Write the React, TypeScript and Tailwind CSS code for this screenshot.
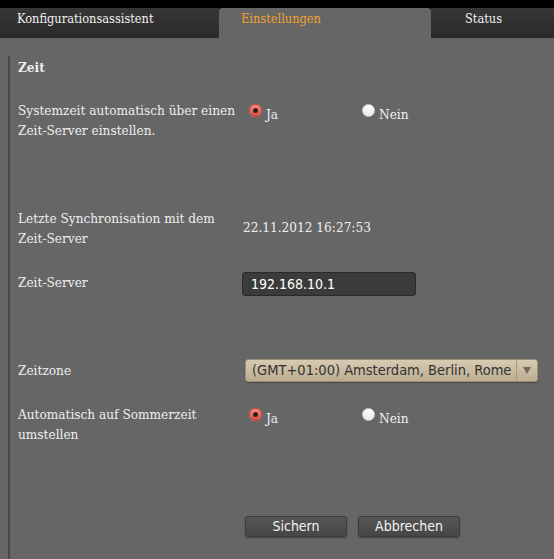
import React from 'react';

const serif = "[font-family:'DejaVu_Serif',serif] [font-stretch:condensed]";
const sans = "[font-family:'DejaVu_Sans','Liberation_Sans',sans-serif]";

const Radio: React.FC<{ checked?: boolean; label: string }> = ({ checked, label }) => (
  <span className="flex items-start">
    {checked ? (
      <span className="mt-[1px] w-[13px] h-[13px] rounded-full bg-gradient-to-b from-[#ff8f80] to-[#e0483a] border border-[#c9463a] flex items-center justify-center shadow-[0_0_1px_#ffb0a0]">
        <span className="w-[5px] h-[5px] rounded-full bg-[#2a2020]" />
      </span>
    ) : (
      <span className="mt-[1px] w-[13px] h-[13px] rounded-full bg-gradient-to-b from-white to-[#e8e8e8] border border-[#d0d0d0]" />
    )}
    <span className="ml-[4px] mt-[1px]">{label}</span>
  </span>
);

const YesNo: React.FC<{ yes: boolean }> = ({ yes }) => (
  <div className="flex items-start pl-[7px] pt-[3px]">
    <div className="w-[113px]">
      <Radio checked={yes} label="Ja" />
    </div>
    <Radio checked={!yes} label="Nein" />
  </div>
);

const tabs = [
  { label: 'Konfigurationsassistent', w: 'w-[219px]', pad: 'pl-[17px]', active: false },
  { label: 'Einstellungen', w: 'w-[212px]', pad: 'pl-[22px]', active: true },
  { label: 'Status', w: 'flex-1', pad: 'pl-[34px]', active: false },
];

export default function App() {
  return (
    <div className={`w-[554px] h-[559px] bg-[#666666] overflow-hidden text-[13.5px] leading-[20px] text-[#eeeeee] ${serif}`}>
      <div className="h-2 bg-black" />
      <div className="flex h-[30px] bg-black text-[12.7px]">
        {tabs.map((t) => (
          <div
            key={t.label}
            className={`${t.w} ${t.pad} pt-[1px] ${
              t.active
                ? 'bg-[#666666] rounded-t-[3px] text-[#f0a030]'
                : 'bg-gradient-to-b from-[#373737] to-[#2a2a2a] text-[#f0f0f0]'
            }`}
          >
            {t.label}
          </div>
        ))}
      </div>

      <div className="pl-2 pt-[18px] h-[521px]">
        <div className="h-full border-l-2 border-[#474747] pl-[8px]">
          <div className="pt-[1px] font-bold">Zeit</div>

          <div className="mt-[23px] h-[108px] flex">
            <div className="w-[224px] pr-[4px]">Systemzeit automatisch über einen Zeit-Server einstellen.</div>
            <YesNo yes />
          </div>

          <div className="h-[64px] flex">
            <div className="w-[224px] pr-[6px]">Letzte Synchronisation mit dem Zeit-Server</div>
            <div className="pl-[1px] pt-[9px]">22.11.2012 16:27:53</div>
          </div>

          <div className="h-[87px] flex">
            <div className="w-[224px]">Zeit-Server</div>
            <input
              readOnly
              value="192.168.10.1"
              className={`w-[174px] h-[24px] bg-[#3b3b3b] border border-[#2a2a2a] rounded-[3px] pl-[8px] text-[14px] text-white outline-none ${sans}`}
            />
          </div>

          <div className="h-[45px] flex">
            <div className="w-[224px] leading-[23px]">Zeitzone</div>
            <div
              className={`ml-[3px] w-[293px] h-[23px] flex rounded-[3px] border border-[#9c8f7a] bg-gradient-to-b from-[#d8cbb3] to-[#bcac91] text-[#333333] shadow-[0_1px_1px_rgba(0,0,0,0.3)] ${sans}`}
            >
              <div className="flex-1 pl-[6px] text-[14.5px] leading-[21px] whitespace-nowrap overflow-hidden">(GMT+01:00) Amsterdam, Berlin, Rome</div>
              <div className="w-[21px] shrink-0 border-l border-[#a89a82] flex items-center justify-center">
                <svg width="8" height="7" viewBox="0 0 8 7">
                  <path d="M0 0h8L4 7z" fill="#6e6a62" />
                </svg>
              </div>
            </div>
          </div>

          <div className="h-[112px] flex">
            <div className="w-[224px] pr-[6px]">Automatisch auf Sommerzeit umstellen</div>
            <YesNo yes />
          </div>

          <div className={`flex gap-[11px] pl-[227px] ${sans}`}>
            {['Sichern', 'Abbrechen'].map((b) => (
              <button
                key={b}
                className="w-[102px] h-[21px] rounded-[3px] border border-[#3c3c3c] bg-gradient-to-b from-[#555555] to-[#464646] text-[#f2f2f2] text-[14px] leading-[19px] shadow-[0_1px_2px_rgba(0,0,0,0.35)]"
              >
                {b}
              </button>
            ))}
          </div>
        </div>
      </div>
    </div>
  );
}
